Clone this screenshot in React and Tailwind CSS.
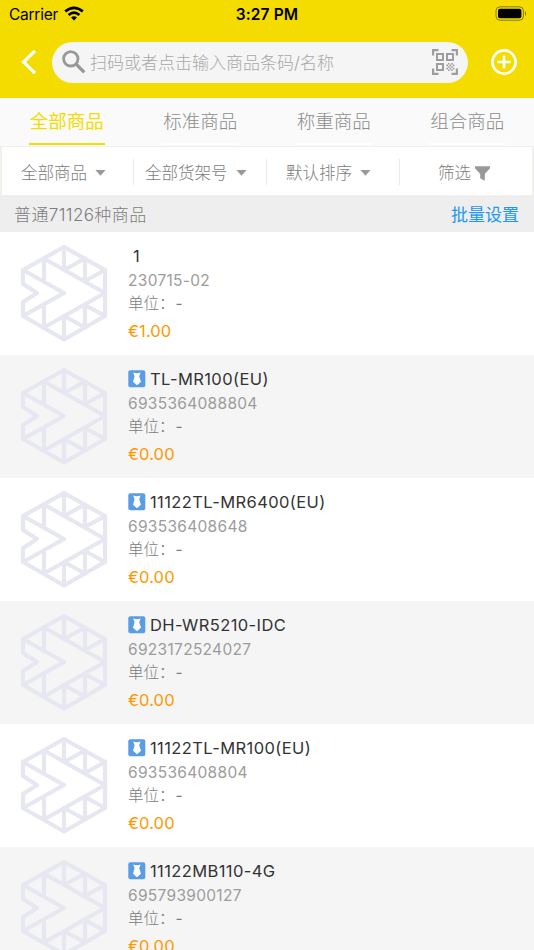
import React from "react";

const tabs = ["全部商品", "标准商品", "称重商品", "组合商品"];

const products = [
  { name: "1", code: "230715-02", price: "€1.00" },
  { name: "TL-MR100(EU)", code: "6935364088804", price: "€0.00", tag: true },
  { name: "11122TL-MR6400(EU)", code: "693536408648", price: "€0.00", tag: true },
  { name: "DH-WR5210-IDC", code: "6923172524027", price: "€0.00", tag: true },
  { name: "11122TL-MR100(EU)", code: "693536408804", price: "€0.00", tag: true },
  { name: "11122MB110-4G", code: "695793900127", price: "€0.00", tag: true },
];

const Placeholder = () => (
  <svg
    className="w-[88px] h-[98px] shrink-0"
    viewBox="20 244 88 98"
    fill="none"
    stroke="#e7e7f2"
    strokeWidth="4.2"
    strokeLinejoin="round"
    strokeLinecap="round"
  >
    <path d="M64 247L105 270V316L64 339.5L23 316V302L37 293L23 284V270Z" />
    <path d="M23 270L64 293L23 316" />
    <path d="M44 258.5L105 293L44 327.5" />
    <path d="M44 258.5V281M64 247V270L85 258.5V281L105 270" />
    <path d="M44 327.5V305M64 339.5V316L85 327.5V305L105 316" />
  </svg>
);

const StatusBar = () => (
  <div className="h-7 flex items-center text-black text-[16px]">
    <div className="w-1/3 pl-[9px] flex items-center">
      <span className="text-[15.5px] pt-px tracking-[-0.25px]">Carrier</span>
      <svg className="w-5 h-[15px] ml-[6px] -mt-[2px]" viewBox="0 0 20 15">
        <path d="M10 14.6L7 11.5Q10 9 13 11.5Z" />
        <path
          d="M4.6 8.9Q10 4.2 15.4 8.9M1.2 5.4Q10 -1.8 18.8 5.4"
          fill="none"
          stroke="#000"
          strokeWidth="2.7"
        />
      </svg>
    </div>
    <span className="w-1/3 pt-px text-center font-semibold text-[15.5px] tracking-[0.1px]">
      3:27 PM
    </span>
    <div className="w-1/3 flex justify-end pr-[6px]">
      <svg className="w-[33px] h-[15px] -mt-[1px]" viewBox="0 0 33 15">
        <rect x="1" y="0.8" width="27.4" height="13.4" rx="4" fill="none" stroke="#000" strokeOpacity="0.45" />
        <rect x="3" y="2.8" width="23.4" height="9.4" rx="2" />
        <path d="M30 5Q32.2 7.5 30 10Z" fillOpacity="0.5" />
      </svg>
    </div>
  </div>
);

const ScanIcon = () => (
  <svg className="w-[26px] h-[26px]" viewBox="0 0 26 26" fill="none" stroke="#9e9e9e" strokeWidth="2.2">
    <path d="M1.1 6.5V1.1H6.5M19.5 1.1H24.9V6.5M1.1 19.5V24.9H6.5M19.5 24.9H24.9V19.5" />
    <path d="M5 5H11V11H5ZM15 5H21V11H15ZM5 15H11V21H5Z" strokeWidth="2" />
    <path
      d="M16 14h1.6v1.6H16zM19.2 14h1.6v1.6H19.2zM14.4 15.6H16v1.6h-1.6zM17.6 15.6h1.6v1.6h-1.6zM20.8 15.6h1.6v1.6h-1.6zM16 17.2h1.6v1.6H16zM19.2 17.2h1.6v1.6H19.2zM14.4 18.8H16v1.6h-1.6zM17.6 18.8h1.6v1.6h-1.6zM20.8 18.8h1.6v1.6h-1.6zM16 20.4h1.6V22H16zM19.2 20.4h1.6V22H19.2z"
      fill="#9e9e9e"
      stroke="none"
    />
  </svg>
);

const Header = () => (
  <div className="h-[98px] shrink-0 bg-[#f4dc00]">
    <StatusBar />
    <div className="flex items-center mt-[13px] h-[42px] pl-[21px] pr-4">
      <svg className="w-4 h-[26px]" viewBox="0 0 16 26" fill="none" stroke="#fff" strokeWidth="3.2">
        <path d="M14 1.8L2.5 13L14 24.2" />
      </svg>
      <div className="ml-[15px] w-[416px] h-[41px] rounded-full bg-[#f5f5f5] flex items-center pl-[10px] pr-[10px]">
        <svg className="w-6 h-6" viewBox="0 0 24 24" fill="none" stroke="#999" strokeWidth="2.8">
          <circle cx="8.8" cy="8.8" r="7.2" />
          <path d="M14 14L22.3 22.3" strokeWidth="3.2" />
        </svg>
        <span className="ml-1 pt-[3px] flex-1 text-[17px] font-light text-[#a8a8a8] whitespace-nowrap">
          扫码或者点击输入商品条码/名称
        </span>
        <ScanIcon />
      </div>
      <svg className="w-[26px] h-[26px] ml-[23px]" viewBox="0 0 26 26" fill="none" stroke="#fff" strokeWidth="2.6">
        <circle cx="13" cy="13" r="11.6" />
        <path d="M13 6.5V19.5M6.5 13H19.5" />
      </svg>
    </div>
  </div>
);

const Arrow = () => (
  <svg className="w-[11px] h-[6px] ml-2" viewBox="0 0 11 6" fill="#9a9a9a">
    <path d="M0.4 0H10.6L5.5 5.8Z" />
  </svg>
);

const Product = ({ item, striped }) => (
  <div className={`h-[123px] shrink-0 flex pl-5 pt-3 ${striped ? "bg-[#f5f5f5]" : "bg-white"}`}>
    <Placeholder />
    <div className="ml-5 flex flex-col whitespace-nowrap">
      <div className="h-[25px] flex items-center text-[16.5px] tracking-[0.4px] text-[#333]">
        {item.tag ? (
          <svg className="w-[18px] h-[18px] mr-1 -mt-[2px]" viewBox="0 0 18 18">
            <rect x="0.3" y="0.3" width="17" height="17" rx="2" fill="#5b9ce6" />
            <path d="M5.2 2.6Q9 4 12.6 2.6L11.2 6.2L13 11.8L9 15.3L5 11.8L6.6 6.2Z" fill="#fff" />
          </svg>
        ) : (
          <span className="w-[5px]" />
        )}
        {item.name}
      </div>
      <div className="h-[23px] flex items-center text-[15.5px] tracking-[0.3px] text-[#9c9c9c]">
        {item.code}
      </div>
      <div className="h-[23px] flex items-center text-[15.5px] font-light text-[#7c7c7c]">
        单位：<span className="ml-[1px] font-normal">-</span>
      </div>
      <div className="h-8 flex items-center text-[16.5px] tracking-[0.1px] text-[#ff9800]">
        {item.price}
      </div>
    </div>
  </div>
);

const App = () => {
  return (
    <div className="w-full h-[950px] overflow-hidden flex flex-col bg-white font-['Inter','Noto_Sans_CJK_SC',sans-serif]">
      <Header />
      <div className="h-12 shrink-0 bg-[#fafafa] flex">
        {tabs.map((tab, i) => (
          <div key={tab} className="w-1/4 flex justify-center">
            <div
              className={
                i === 0
                  ? "w-[76px] border-b-2 border-[#f4dc00] text-[#f4dc00] h-[47px] pt-0.5 flex items-center justify-center text-[18.5px] font-normal whitespace-nowrap"
                  : "w-[76px] border-b-2 border-white text-[#8c8c8c] h-[47px] pt-0.5 flex items-center justify-center text-[18.5px] font-light whitespace-nowrap"
              }
            >
              {tab}
            </div>
          </div>
        ))}
      </div>
      <div className="h-[50px] shrink-0 bg-white border-x-2 border-t border-b border-[#f0f0ea] flex items-center pt-0.5 text-[16.5px] font-light text-[#7c7c7c] whitespace-nowrap">
        <div className="w-[132px] h-[26px] border-r border-[#ecece6] flex items-center pl-[19px] pt-0.5">
          全部商品
          <Arrow />
        </div>
        <div className="w-[133px] h-[26px] border-r border-[#ecece6] flex items-center pl-[11px] pt-0.5">
          全部货架号
          <Arrow />
        </div>
        <div className="w-[133px] h-[26px] border-r border-[#ecece6] flex items-center pl-[19px] pt-0.5">
          默认排序
          <Arrow />
        </div>
        <div className="flex-1 flex items-center pl-[38px] pt-0.5">
          筛选
          <svg className="w-[15px] h-[15px] ml-1" viewBox="0 0 15 15" fill="#999">
            <path d="M0 0.3H15V2.2L9.8 8V14.8L5.2 12.3V8L0 2.2Z" />
          </svg>
        </div>
      </div>
      <div className="h-9 shrink-0 bg-[#eee] flex items-center justify-between px-[15px] pt-[3px] text-[17px] font-light whitespace-nowrap">
        <span className="-ml-px text-[17px] tracking-[0.4px] text-[#7c7c7c]">普通71126种商品</span>
        <span className="text-[#2196f3] font-normal">批量设置</span>
      </div>
      {products.map((item, i) => (
        <Product key={item.code} item={item} striped={i % 2 === 1} />
      ))}
    </div>
  );
};

export default App;
